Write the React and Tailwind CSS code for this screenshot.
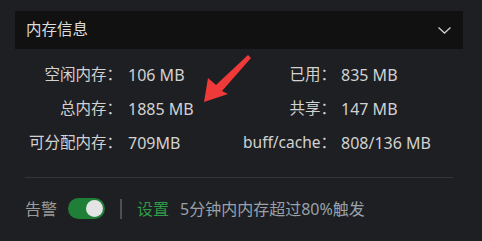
import React from "react";

function Row({ l1, v1, l2, v2 }) {
  return (
    <div className="flex h-[34px] items-center">
      <div className="w-[97px] text-right whitespace-nowrap text-[15.5px]">{l1}</div>
      <div className="w-[117px] pl-[6px] whitespace-nowrap text-[16px]">{v1}</div>
      <div className="w-[97px] text-right whitespace-nowrap text-[15.5px]">{l2}</div>
      <div className="pl-[5px] whitespace-nowrap text-[16px]">{v2}</div>
    </div>
  );
}

export default function App() {
  return (
    <div
      className="relative w-[482px] h-[241px] bg-[#1e1f22] overflow-hidden text-[15px] text-[#d2d2d2]"
      style={{ fontFamily: "'Noto Sans','Noto Sans CJK SC',sans-serif" }}
    >
      <div className="pt-[11px] px-[15px] pr-[19px]">
        <div className="h-[38px] bg-[#111111] flex items-center justify-between pl-[11px] pr-[12px]">
          <span className="text-[#dcdcdc] leading-none text-[15.5px]">内存信息</span>
          <svg width="13" height="7" viewBox="0 0 13 7" className="text-[#cfcfcf]">
            <path d="M0.5 0.5 L6.5 6 L12.5 0.5" fill="none" stroke="currentColor" strokeWidth="1.3" />
          </svg>
        </div>
      </div>
      <div className="pl-[25px] mt-[9px]">
        <Row l1="空闲内存：" v1="106 MB" l2="已用：" v2="835 MB" />
        <Row l1="总内存：" v1="1885 MB" l2="共享：" v2="147 MB" />
        <Row l1="可分配内存：" v1="709MB" l2="buff/cache：" v2="808/136 MB" />
      </div>
      <div className="ml-[25px] mr-[29px] mt-[17px] h-px bg-[#343538]" />
      <div className="flex items-center pl-[25px] mt-[20px] h-[21px] text-[16px]">
        <span className="text-[#9a9a9a]">告警</span>
        <div className="ml-[11px] w-[37px] h-[21px] rounded-full bg-[#1f7f37] flex items-center justify-end pr-[2px]">
          <div className="w-[17px] h-[17px] rounded-full bg-[#e4e4e4]" />
        </div>
        <div className="ml-[15px] w-[2px] h-[20px] bg-[#4e4f52]" />
        <span className="ml-[15px] text-[#2f9a47]">设置</span>
        <span className="ml-[11px] text-[#98a1aa]">5分钟内内存超过80%触发</span>
      </div>
      <svg className="absolute left-0 top-0 pointer-events-none" width="482" height="241">
        <polygon
          points="204,102 208,78 216,85 248,55 251,58 222,91 228,94"
          fill="#f03a3a"
        />
      </svg>
    </div>
  );
}
